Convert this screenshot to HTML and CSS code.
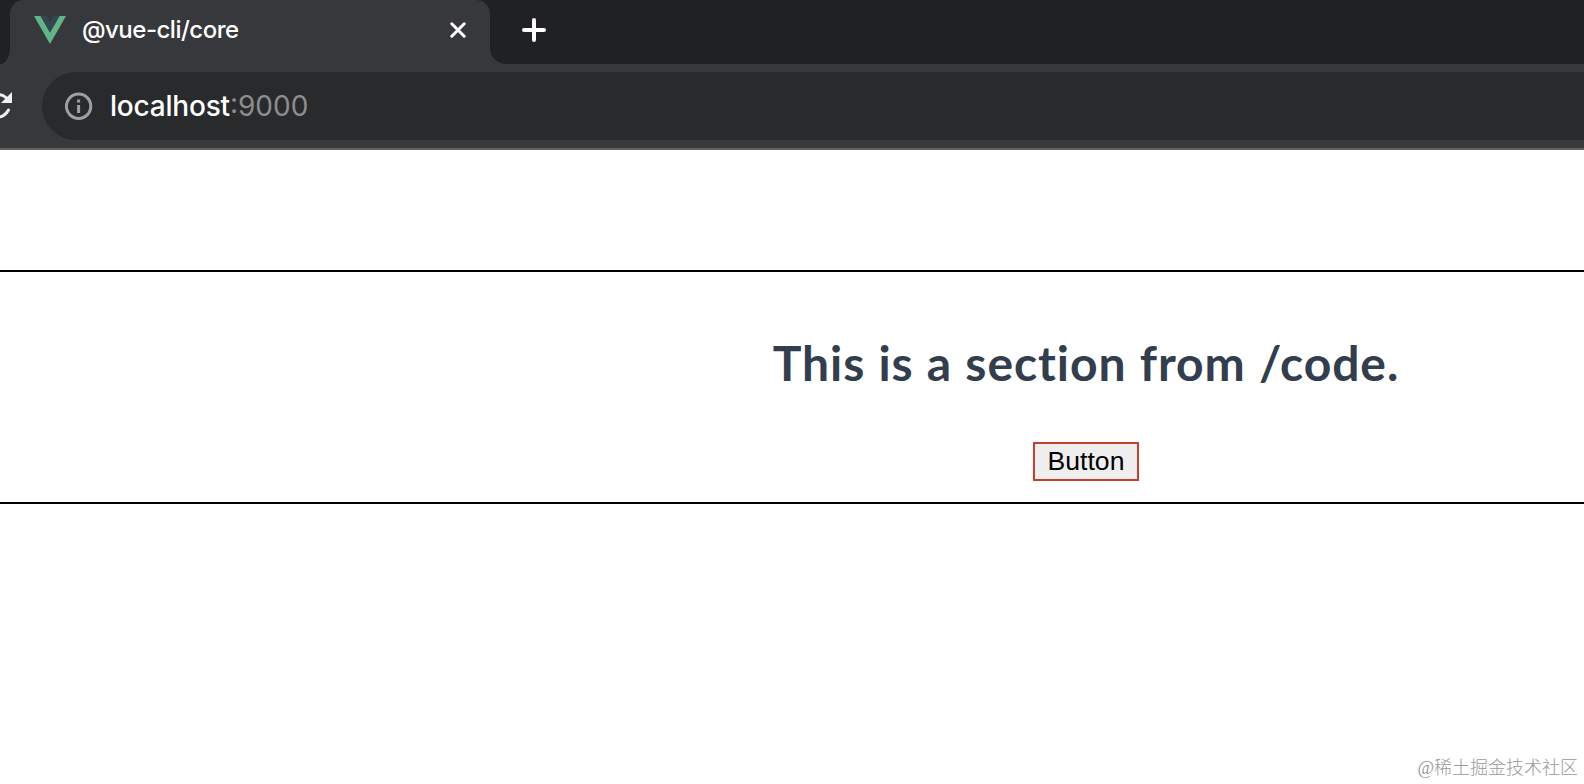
FILE: index.html
```html
<!DOCTYPE html>
<html lang="en">
<head>
  <meta charset="UTF-8" />
  <title>@vue-cli/core</title>
  <link rel="stylesheet" href="styles.css">
</head>
<body>
  <header class="browser">
    <div class="tab-strip">
      <div class="prev-tab"></div>
      <div class="tab">
        <svg class="vue-logo" viewBox="0 0 32 28">
          <path fill="#62b587" d="M0 0h6.500L16 16.500 25.500 0H32L16 28z" />
          <path fill="#34495e" d="M6.500 0h5.800L16 6.200 19.700 0h5.800L16 16.500z" opacity=".75" />
        </svg>
        <span class="tab-title">@vue-cli/core</span>
        <svg class="close" viewBox="0 0 16 16">
          <path d="M1.800 1.800l12.400 12.400M14.200 1.800L1.800 14.200" />
        </svg>
      </div>
      <div class="strip-rest">
        <svg class="plus" viewBox="0 0 24 24">
          <path d="M12 2v20M2 12h20" />
        </svg>
      </div>
    </div>
    <div class="toolbar">
      <svg class="reload" viewBox="0 0 12 28">
        <path class="reload-arc" d="M-3 3C2 2 5 4 8 8M8.500 18C6 22.500 3 25-3 25.500" />
        <path class="reload-head" d="M12 0v11H1z" />
      </svg>
      <div class="address">
        <svg class="info" viewBox="0 0 28 28">
          <circle cx="13.600" cy="14.300" r="12.200" />
          <path d="M13.600 7.500v3M13.600 13v8" />
        </svg>
        <span class="url">localhost</span><span class="port">:9000</span>
      </div>
    </div>
  </header>

  <main class="page">
    <section class="section">
      <h1 class="title">This is a section from /code.</h1>
      <button class="btn">Button</button>
    </section>
  </main>

  <div class="watermark">@稀土掘金技术社区</div>
</body>
</html>
```

FILE: styles.css
```css
* {
  margin: 0;
  padding: 0;
  box-sizing: border-box;
}
body {
  height: 784px;
  background: #fff;
  overflow: hidden;
  position: relative;
}
svg {
  display: block;
  flex: none;
}
.browser {
  height: 150px;
  background: #37383b;
  border-bottom: 2px solid #626365;
  font-family: Inter, sans-serif;
}
.tab-strip {
  height: 64px;
  display: flex;
  background: linear-gradient(#202124 50%, #37383b 50%);
}
.prev-tab {
  width: 10px;
  background: #202124;
  border-bottom-right-radius: 10px 16px;
}
.tab {
  width: 480px;
  padding: 0 24px 4px 24px;
  display: flex;
  align-items: center;
  background: #37383b;
  border-radius: 14px 14px 0 0;
}
.vue-logo {
  width: 32px;
  height: 28px;
}
.tab-title {
  margin-left: 16px;
  flex: 1;
  color: #fff;
  font-size: 24px;
  font-weight: 500;
  letter-spacing: -0.5px;
  line-height: 30px;
  white-space: nowrap;
}
.close {
  width: 16px;
  height: 16px;
}
.close path,
.plus path {
  fill: none;
  stroke: #fff;
  stroke-width: 3;
  stroke-linecap: round;
}
.plus path {
  stroke-width: 4;
}
.strip-rest {
  flex: 1;
  padding: 18px 0 0 32px;
  background: #202124;
  border-bottom-left-radius: 16px;
}
.plus {
  width: 24px;
  height: 24px;
}
.toolbar {
  height: 84px;
  display: flex;
  align-items: center;
}
.reload {
  width: 12px;
  height: 28px;
}
.reload-arc {
  fill: none;
  stroke: #eeeff1;
  stroke-width: 3;
  stroke-linecap: round;
}
.reload-head {
  fill: #eeeff1;
}
.address {
  flex: 1;
  height: 68px;
  margin-left: 30px;
  padding-left: 23px;
  display: flex;
  align-items: center;
  background: #292a2b;
  border-radius: 34px 0 0 34px;
  font-size: 28px;
  line-height: 36px;
}
.info {
  width: 28px;
  height: 28px;
  margin-right: 17px;
}
.info circle,
.info path {
  fill: none;
  stroke: #9d9fa1;
  stroke-width: 3;
}
.url {
  color: #fff;
  font-weight: 500;
  letter-spacing: -0.2px;
}
.port {
  color: #8c8d8e;
}
.page {
  padding-top: 120px;
}
.section {
  height: 234px;
  padding: 61px 0 0 588px;
  border-top: 2px solid #000;
  border-bottom: 2px solid #000;
  text-align: center;
}
.title {
  margin-bottom: 49px;
  color: #323d4d;
  font-family: Lato, sans-serif;
  font-size: 48px;
  font-weight: 700;
  letter-spacing: 0.95px;
  word-spacing: 0.6px;
  line-height: 60px;
  font-variant-ligatures: none;
}
.btn {
  width: 106px;
  height: 39px;
  padding-bottom: 1px;
  background: #efeeee;
  border: 2px solid #c5402f;
  color: #000;
  font-family: "Liberation Sans", Arial, sans-serif;
  font-size: 26.6px;
  line-height: 34px;
}
.watermark {
  position: absolute;
  right: 6px;
  bottom: 3px;
  color: #999;
  font-family: "Liberation Serif", "Noto Sans CJK SC", serif;
  font-size: 18px;
  font-weight: 300;
  line-height: 26px;
}
```
